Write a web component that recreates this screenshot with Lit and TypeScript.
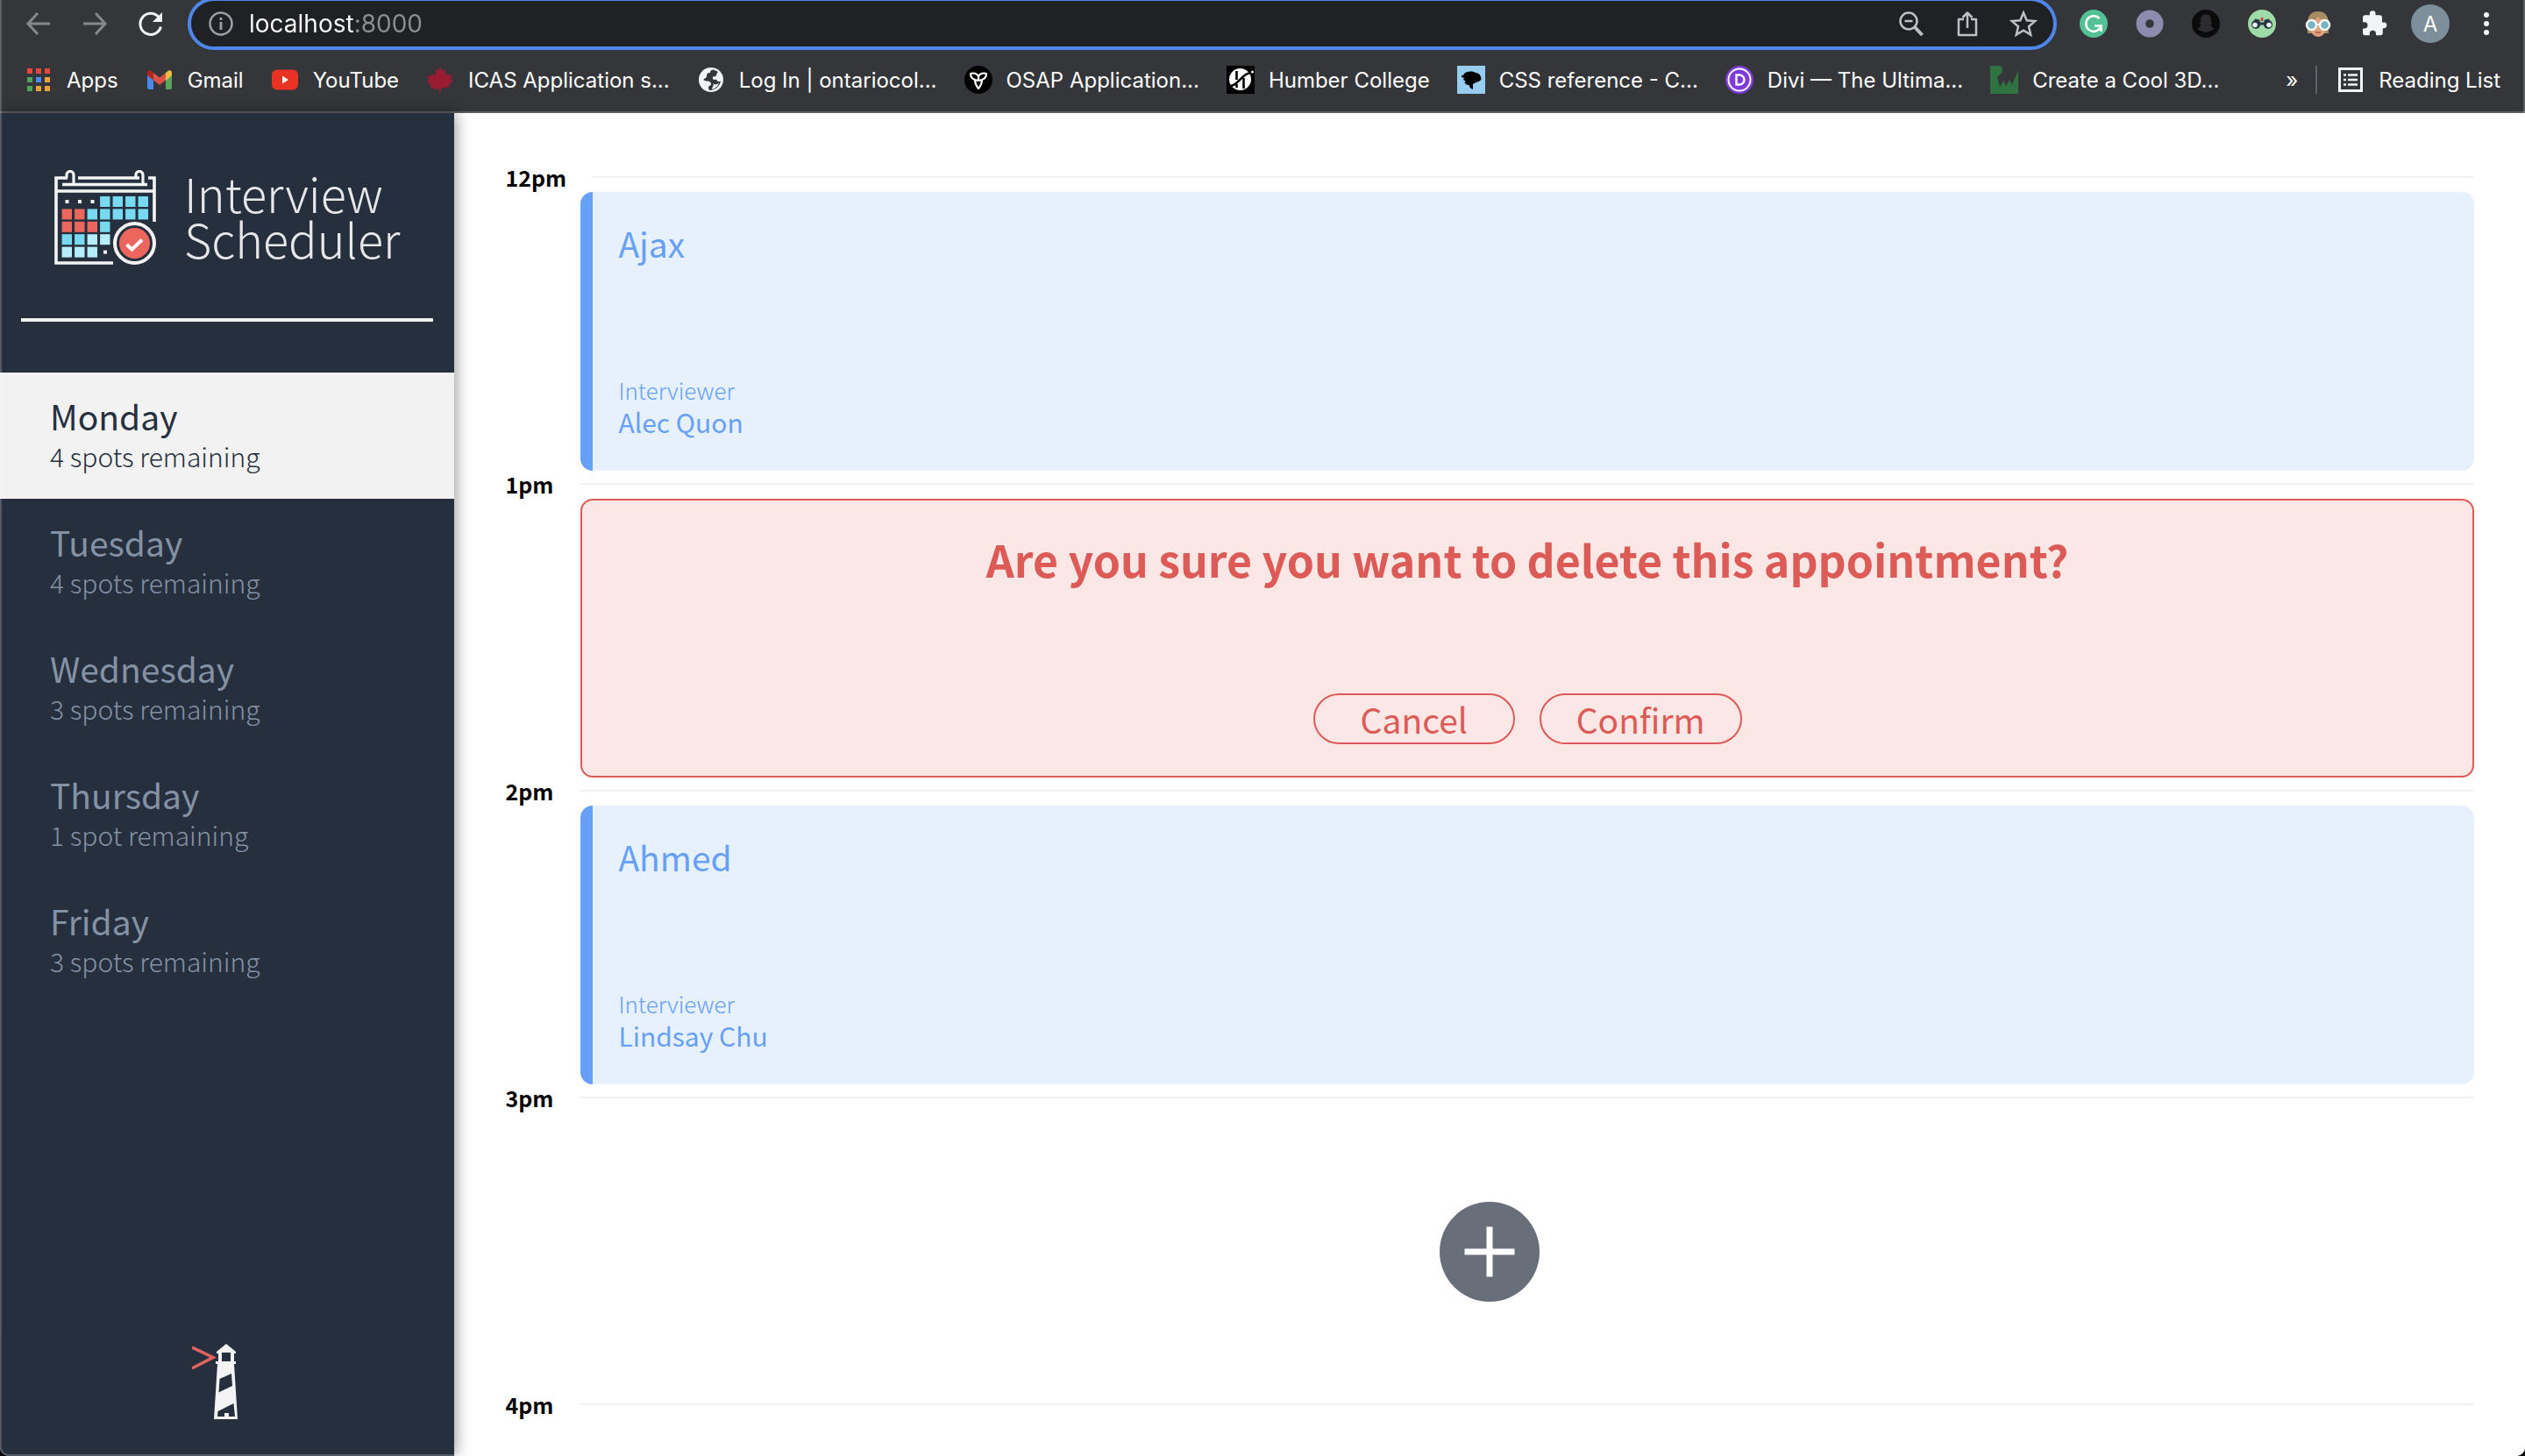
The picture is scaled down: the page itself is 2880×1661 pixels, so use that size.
import { LitElement, html, svg, css, nothing } from "lit";
import { customElement, property, state } from "lit/decorators.js";
import { classMap } from "lit/directives/class-map.js";

/* ---------- icons ---------- */

const icon = (body: unknown, box = "0 0 32 32") =>
  html`<svg class="icon" viewBox=${box} aria-hidden="true">${body}</svg>`;

const line = (d: string, color: string, width = 3) =>
  svg`<path d=${d} fill="none" stroke=${color} stroke-width=${width} />`;

const backIcon = icon(line("M29 16H4M15 4L4 16l11 12", "#87888b"));
const forwardIcon = icon(line("M3 16h25M17 4l11 12-11 12", "#87888b"));
const reloadIcon = icon(svg`
  <path d="M27.500 19.500A12 12 0 1 1 25 8.500" fill="none" stroke="#f1f3f4" stroke-width="3" />
  <path d="M29 3v11H18z" fill="#f1f3f4" />`);
const infoIcon = icon(svg`
  <circle cx="16" cy="16" r="12.500" fill="none" stroke="#9aa0a6" stroke-width="2.500" />
  <path d="M14.600 14h2.800v9h-2.800zM14.600 9h2.800v3h-2.800z" fill="#9aa0a6" />`);
const zoomIcon = icon(svg`
  <circle cx="13" cy="13" r="9.500" fill="none" stroke="#bdc1c6" stroke-width="2.500" />
  <path d="M8.500 13h9" fill="none" stroke="#bdc1c6" stroke-width="2.500" />
  <path d="M20 20l8.500 9" stroke="#bdc1c6" stroke-width="4" />`);
const shareIcon = icon(svg`
  <path d="M12 11H6v18h20V11h-6M16 21V4M10.500 9L16 3.500 21.500 9" fill="none" stroke="#bdc1c6"
    stroke-width="2.500" stroke-linejoin="round" />`);
const starIcon = icon(svg`
  <path d="M16 3.500l3.700 8.800 9.500.8-7.200 6.200 2.200 9.300-8.200-4.900-8.200 4.900L10 19.300l-7.200-6.200 9.500-.8z"
    fill="none" stroke="#bdc1c6" stroke-width="2.500" />`);

const grammarIcon = icon(svg`
  <circle cx="16" cy="16" r="16" fill="#54c096" />
  <path d="M22.500 10A8.800 8.800 0 1 0 24.500 18.500H17M24.500 18.500v6.500" fill="none" stroke="#fff" stroke-width="2.600" />`);
const ringIcon = icon(svg`
  <circle cx="16" cy="16" r="15.500" fill="#8d8bae" /><circle cx="16" cy="16" r="4.800" fill="#35363a" />`);
const ghostIcon = icon(svg`
  <circle cx="16" cy="16" r="16" fill="#0b0b0c" />
  <path d="M16 5c-4 0-6 3-5.700 6.500v2.500l-2.300.8 2.500 2.200c-.8 2.500-2.500 4-4.500 4.800 1 1.400 3 1 3.700 2.400
    2.300-.3 3.800 1.800 6.300 1.800s4-2.100 6.300-1.800c.7-1.400 2.700-1 3.700-2.400-2-.8-3.700-2.300-4.500-4.800l2.500-2.200-2.300-.8
    v-2.500C22 8 20 5 16 5z" fill="#2b2c2f" />`);
const binocularsIcon = icon(svg`
  <circle cx="16" cy="16" r="16" fill="#9fdba9" />
  <path d="M8 10.500l5 1 1 3h4l1-3 5-1 3 7H5z" fill="#2b3646" />
  <circle cx="9" cy="17" r="5" fill="#2b3646" /><circle cx="23" cy="17" r="5" fill="#2b3646" />
  <circle cx="8" cy="17.500" r="2.800" fill="#e7f0f2" /><circle cx="24" cy="17.500" r="2.800" fill="#e7f0f2" />
  <path d="M14.600 9h2.800v4h-2.800z" fill="#c94440" />`);
const faceIcon = icon(svg`
  <path d="M4 16C4 6 9 2 16 2s12 4 12 14v11h-5V14H9v13H4z" fill="#a98d62" />
  <path d="M7 13l9-5 9 5v8c0 6-5 10-9 10s-9-4-9-10z" fill="#dfa27c" />
  <path d="M6 13c6 0 9-3 10-6 2 3 5 6 10 6V8L16 3 6 8z" fill="#a98d62" />
  <path d="M13 26h6" stroke="#b9573f" stroke-width="1.500" />
  <circle cx="8.500" cy="17.500" r="5.500" fill="#78b2c5" stroke="#f4f6f6" stroke-width="2.500" />
  <circle cx="23.500" cy="17.500" r="5.500" fill="#78b2c5" stroke="#f4f6f6" stroke-width="2.500" />
  <path d="M14 17h4" stroke="#f4f6f6" stroke-width="2" />`);
const puzzleIcon = icon(svg`
  <path d="M27 14.500h-2V9a2.700 2.700 0 0 0-2.700-2.700H17.500V4.500a3.300 3.300 0 0 0-6.600 0v1.800H5.700A2.700 2.700 0 0 0 3 9v5.200
    h1.900a3.600 3.600 0 0 1 0 7.200H3v5.200a2.700 2.700 0 0 0 2.700 2.700h5.100v-2a3.600 3.600 0 0 1 7.200 0v2h5.100
    a2.700 2.700 0 0 0 2.700-2.700v-5.400h1.200a3.300 3.300 0 0 0 0-6.700z" fill="#f1f3f4" />`);
const dotsIcon = icon(svg`
  <circle cx="16" cy="6" r="3" fill="#f1f3f4" /><circle cx="16" cy="16" r="3" fill="#f1f3f4" />
  <circle cx="16" cy="26" r="3" fill="#f1f3f4" />`);

const appColors = ["#e8453c", "#e8453c", "#e8453c", "#53a35b", "#4a8af4", "#eaa43a", "#53a35b", "#eaa43a", "#eaa43a"];
const appsIcon = icon(appColors.map((fill, i) =>
  svg`<rect x=${3 + (i % 3) * 10} y=${3 + Math.floor(i / 3) * 10} width="6" height="6" fill=${fill} />`));
const gmailIcon = icon(svg`
  <path d="M2 9l7 5v13H4a2 2 0 0 1-2-2z" fill="#4b87ee" />
  <path d="M23 14l7-5v16a2 2 0 0 1-2 2h-5z" fill="#58a65c" />
  <path d="M23 8l3-2.300C28 4.500 30 6 30 8v3l-7 6z" fill="#f3bd42" />
  <path d="M9 8l7 5.500L23 8v8.500L16 22l-7-5.500z" fill="#dd5144" />
  <path d="M2 11V8c0-2 2-3.500 4-2.300L9 8v8.500z" fill="#b3261e" />`);
const youtubeIcon = icon(svg`
  <rect x="1" y="4.500" width="30" height="23" rx="6" fill="#e93223" />
  <path d="M13 11.500v9l7-4.500z" fill="#fff" />`);
const mapleIcon = icon(svg`
  <path d="M16 1l3 5 3-2v7l3-3 1 3h4l-2 4 3 2-5 4 1 3-6 1-4 1v4h-2v-4l-5 1-5-3v-3l-4-2 2-3-2-4h4l1-3 4 3 1-8 3 2z"
    fill="#9a1c33" />`);
const globeIcon = icon(svg`
  <circle cx="16" cy="16" r="14" fill="#f1f3f4" />
  <path d="M19 4.500c-3 0-4 1.500-4 3.500-3 0-4 1.500-4 3.500s-1 3-3.500 3.500c0 2 2 2.500 4.500 2.500s4 1.500 4 3.500-3 1.500-3 4 1 2.500 2 3
    c6-.5 11-5 12-10.500-1.500 1-4 .5-4.500-1s-4 .5-4.500-2 1-2 3-2.500.500-3 2-3.500.500-2.500-1-2.500z" fill="#35363a" />
  <path d="M18 20c2 2 5 1.500 7-.5-1 3.500-4 6.500-8 7.500 0-3 3-4 1-7z" fill="#f1f3f4" />`);
const trilliumIcon = icon(svg`
  <circle cx="16" cy="16" r="16" fill="#000" />
  <path d="M16 12c-2-3.500-6-4-9-3 0 4 2 6 5 7 0 4 1.500 7 4 10 2.500-3 4-6 4-10 3-1 5-3 5-7-3-1-7-.5-9 3zm0 0v5l-4-1m4 1l4-1"
    fill="none" stroke="#fff" stroke-width="2.200" stroke-linejoin="round" />`);
const humberIcon = icon(svg`
  <path d="M0 0h32v32H0z" fill="#000" /><circle cx="15.500" cy="15.500" r="12.500" fill="#fff" />
  <path d="M11.500 6v10M5 23C14 21 17 10 27 8M19.500 14v12M11.500 21v4" fill="none" stroke="#000" stroke-width="2.600" />
  <circle cx="29.500" cy="7" r="1.500" fill="#fff" />`);
const cssIcon = icon(svg`
  <path d="M0 0h32v32H0z" fill="#97cef0" />
  <path d="M8 9c4-3 9-3 13-1 4 0 6 3 6.500 7-1 3-4 3-6 4l-3.500 2v6c-3-1-4-3-4.500-5-3 0-4-1-5-3l1-2-3-1 2-1.500
    c-1.500-1-3-1-4-3 2 0 3-1 3.500-2.500z" fill="#000" />`);
const diviIcon = icon(svg`
  <circle cx="16" cy="16" r="16" fill="#7e3bdc" />
  <circle cx="16" cy="16" r="12.500" fill="none" stroke="#fff" stroke-width="2" />
  <path d="M12.500 10.500v11h3.500a5.500 5.500 0 0 0 0-11z" fill="none" stroke="#fff" stroke-width="2.400" />`);
const createIcon = icon(svg`
  <path d="M0 0h8c6 0 7 4 5 8l-5 5 3 11 4-7 3 6 4-7 3 6 7-17v27H0z" fill="#2f7340" />`);
const readingIcon = icon(svg`
  <rect x="3.500" y="3.500" width="25" height="25" fill="none" stroke="#f1f3f4" stroke-width="3" />
  <path d="M8 10.500h3M8 16h3M8 21.500h3M13 10.500h11M13 16h11M13 21.500h11" stroke="#f1f3f4" stroke-width="2.400" />`);

/* ---------- data ---------- */

const bookmarks = [
  { label: "Apps", icon: appsIcon },
  { label: "Gmail", icon: gmailIcon },
  { label: "YouTube", icon: youtubeIcon },
  { label: "ICAS Application s...", icon: mapleIcon },
  { label: "Log In | ontariocol...", icon: globeIcon },
  { label: "OSAP Application...", icon: trilliumIcon },
  { label: "Humber College", icon: humberIcon },
  { label: "CSS reference - C...", icon: cssIcon },
  { label: "Divi — The Ultima...", icon: diviIcon },
  { label: "Create a Cool 3D...", icon: createIcon },
];

const extensions = [
  { name: "Grammar", icon: grammarIcon },
  { name: "Ring", icon: ringIcon },
  { name: "Ghost", icon: ghostIcon },
  { name: "Binoculars", icon: binocularsIcon },
  { name: "Face", icon: faceIcon },
  { name: "Extensions", icon: puzzleIcon },
];

const days = [
  { name: "Monday", spots: 4 },
  { name: "Tuesday", spots: 4 },
  { name: "Wednesday", spots: 3 },
  { name: "Thursday", spots: 1 },
  { name: "Friday", spots: 3 },
];

type Slot = { time: string; kind: "show" | "confirm" | "empty" | "last"; student?: string; interviewer?: string };

const slots: Slot[] = [
  { time: "12pm", kind: "show", student: "Ajax", interviewer: "Alec Quon" },
  { time: "1pm", kind: "confirm" },
  { time: "2pm", kind: "show", student: "Ahmed", interviewer: "Lindsay Chu" },
  { time: "3pm", kind: "empty" },
  { time: "4pm", kind: "last" },
];

/* ---------- shared styles ---------- */

const base = css`
  * { box-sizing: border-box; }
  button { margin: 0; padding: 0; border: 0; background: none; font: inherit; color: inherit; cursor: pointer; }
  ul { margin: 0; padding: 0; list-style: none; }
  a { color: inherit; text-decoration: none; }
  svg { display: block; }
`;

/* ---------- browser bars ---------- */

@customElement("browser-bars")
export class BrowserBars extends LitElement {
  static styles = [base, css`
    :host {
      display: block;
      background: #35363a;
      border-bottom: 2px solid #5f6064;
      color: #fff;
      font-family: Inter, "Liberation Sans", sans-serif;
      overflow: hidden;
    }
    .icon { width: 32px; height: 32px; flex: none; }
    .toolbar { display: flex; align-items: center; gap: 26px; margin-top: -3px; padding: 0 28px; }
    .group { display: flex; align-items: center; gap: 32px; }
    .omnibox {
      flex: 1;
      display: flex;
      align-items: center;
      gap: 16px;
      height: 60px;
      padding: 0 18px;
      border: 4px solid #4e86ec;
      border-radius: 30px;
      background: #202124;
    }
    .address {
      flex: 1;
      min-width: 0;
      padding: 0;
      border: 0;
      outline: 0;
      font: 28px Inter, "Liberation Sans", sans-serif;
      color: transparent;
      background: linear-gradient(90deg, #fff 122px, #8c8e91 122px) text;
    }
    .avatar {
      width: 44px;
      height: 44px;
      margin: 0 -6px;
      border-radius: 50%;
      background: #7c8f9b;
      font-size: 24px;
      text-align: center;
    }
    .bookmarks { display: flex; align-items: center; height: 70px; padding: 0 28px 2px; font-size: 24px; }
    .list { display: flex; gap: 31px; flex: 1; }
    .bookmark { display: flex; align-items: center; gap: 16px; white-space: nowrap; }
    .reading { margin-left: 20px; padding-left: 22px; border-left: 2px solid #5f6368; height: 32px; }
  `];

  render() {
    return html`
      <div class="toolbar">
        <div class="group">
          <button aria-label="Back">${backIcon}</button>
          <button aria-label="Forward">${forwardIcon}</button>
          <button aria-label="Reload">${reloadIcon}</button>
        </div>
        <div class="omnibox">
          ${infoIcon}
          <input class="address" aria-label="Address" value="localhost:8000" />
          <div class="group">
            <button aria-label="Zoom">${zoomIcon}</button>
            <button aria-label="Share">${shareIcon}</button>
            <button aria-label="Bookmark">${starIcon}</button>
          </div>
        </div>
        <div class="group">
          ${extensions.map((e) => html`<button aria-label=${e.name}>${e.icon}</button>`)}
          <button class="avatar" aria-label="Profile">A</button>
          <button aria-label="Menu">${dotsIcon}</button>
        </div>
      </div>
      <nav class="bookmarks">
        <div class="list">
          ${bookmarks.map((b) => html`<a class="bookmark" href="#">${b.icon}<span>${b.label}</span></a>`)}
        </div>
        <button aria-label="More bookmarks">»</button>
        <a class="bookmark reading" href="#">${readingIcon}<span>Reading List</span></a>
      </nav>`;
  }
}

/* ---------- sidebar ---------- */

const B = "#78daf1";
const R = "#ed665e";
const L = "#b5eefa";
const calendar: (string | null)[][] = [
  ["dot", "dot", "dot", B, B, B, B],
  [R, R, B, B, B, B, B],
  [R, R, R, B, null, null, null],
  [B, B, L, L, null, null, null],
  [L, L, L, "dot", null, null, null],
];

@customElement("day-sidebar")
export class DaySidebar extends LitElement {
  @state() private day = "Monday";

  static styles = [base, css`
    :host {
      display: flex;
      flex-direction: column;
      background: #262f3e;
      box-shadow: 2px 0 16px rgba(0, 0, 0, 0.4);
      font-family: "Source Sans Pro", "Noto Sans CJK SC", sans-serif;
      z-index: 1;
    }
    .brand { display: flex; justify-content: center; gap: 32px; padding-top: 65px; }
    .mark { width: 116px; height: 108px; flex: none; }
    .name { margin: 0; font-size: 54px; line-height: 52px; font-weight: 200; color: #e8e8ea; }
    .word { display: block; }
    .rule { width: calc(100% - 48px); height: 4px; margin: 61px 24px 58px; border: 0; background: #f0f0ee; }
    .day {
      display: flex;
      flex-direction: column;
      justify-content: center;
      width: 100%;
      height: 144px;
      padding: 0 57px 6px;
      text-align: left;
      color: #8492a6;
    }
    .selected { background: #f2f2f2; color: #262f3e; }
    .title { font-size: 39px; line-height: 52px; }
    .spots { font-size: 30px; line-height: 40px; font-weight: 300; }
    .lighthouse { width: 80px; height: 86px; margin: auto auto 42px; }
  `];

  render() {
    return html`
      <div class="brand">
        <svg class="mark" viewBox="0 0 116 108" aria-hidden="true">
          <path d="M15 9H2v97h65M27 9h70M107 9h7v50M9 16.500h97M2 24h112" fill="none" stroke="#f3f3f3" stroke-width="3.600" />
          <path d="M14 9V5.500a4 4 0 0 1 8 0V16M93 9V5.500a4 4 0 0 1 8 0V16" fill="none" stroke="#f3f3f3" stroke-width="3.200" />
          ${calendar.map((row, y) => row.map((cell, x) =>
            cell === null ? nothing
              : cell === "dot"
                ? svg`<rect x=${12.5 + x * 14.5} y=${34 + y * 14.4} width="4" height="4" fill="#f3f3f3" />`
                : svg`<rect x=${8.6 + x * 14.5} y=${30 + y * 14.4} width="11.400" height="12" fill=${cell} />`))}
          <circle cx="91.500" cy="83.500" r="22.500" fill="#262f3e" stroke="#f3f3f3" stroke-width="4" />
          <circle cx="91.500" cy="83.500" r="17.500" fill=${R} />
          <path d="M82.500 85l6 5.500L100 79.500" fill="none" stroke="#fff" stroke-width="4" />
        </svg>
        <h1 class="name"><span class="word">Interview</span><span class="word">Scheduler</span></h1>
      </div>
      <hr class="rule" />
      <nav>
        <ul>
          ${days.map((d) => html`<li>
            <button class=${classMap({ day: true, selected: d.name === this.day })} @click=${() => (this.day = d.name)}>
              <span class="title">${d.name}</span>
              <span class="spots">${d.spots} ${d.spots === 1 ? "spot" : "spots"} remaining</span>
            </button>
          </li>`)}
        </ul>
      </nav>
      <svg class="lighthouse" viewBox="0 0 80 86" aria-hidden="true">
        <path d="M0 4l24 11.500L0 28" fill="none" stroke="#e2635f" stroke-width="3.600" />
        <path d="M39 0l11 9v2h-2v9h2v3h-2l4 63H25l4-63h-2v-3h3v-9h-2V9z" fill="#f3f3f3" />
        <path d="M34 10h10v10H34zM31.500 40L45 34l1 14-15.500 7.500zM29.500 77l18-9 1.500 15h-7v-4h-5v4h-8z" fill="#262f3e" />
      </svg>`;
  }
}

/* ---------- appointment ---------- */

@customElement("appointment-slot")
export class AppointmentSlot extends LitElement {
  @property({ attribute: false }) slotData!: Slot;

  static styles = [base, css`
    :host { display: block; }
    .time { display: flex; align-items: center; gap: 30px; height: 30px; margin-bottom: 2px; }
    .hour { min-width: 54px; margin: 0; font-size: 25px; line-height: 30px; font-weight: 600; color: #000; }
    .divider { flex: 1; height: 2px; margin: 0; border: 0; background: #f2f2f2; }
    .card {
      display: flex;
      flex-direction: column;
      justify-content: space-between;
      height: 318px;
      margin-left: 86px;
      border-radius: 14px;
    }
    .show { padding: 28px 28px 37px 29px; border-left: 14px solid #66a0f8; background: #e7f1fe; color: #66a0f8; }
    .student { margin: 0; font-size: 39px; line-height: 60px; font-weight: 400; }
    .role { margin: 0; font-size: 26px; line-height: 34px; font-weight: 300; }
    .person { margin: 0; font-size: 30px; line-height: 38px; font-weight: 400; }
    .confirm { align-items: center; padding: 28px 36px 36px; border: 2px solid #dd5b57; background: #fbe7e6; color: #dd5b57; }
    .question { margin: 0; font-size: 50px; line-height: 76px; font-weight: 600; }
    .actions { display: flex; gap: 28px; }
    .action {
      min-width: 230px;
      height: 58px;
      padding: 0 40px;
      border: 2px solid #dd5b57;
      border-radius: 29px;
      font-size: 39px;
      line-height: 52px;
    }
    .empty { display: grid; place-items: center; height: 318px; }
    .add { width: 114px; height: 114px; }
  `];

  private body(s: Slot) {
    switch (s.kind) {
      case "show":
        return html`<article class="card show">
          <h2 class="student">${s.student}</h2>
          <div>
            <h4 class="role">Interviewer</h4>
            <h3 class="person">${s.interviewer}</h3>
          </div>
        </article>`;
      case "confirm":
        return html`<article class="card confirm">
          <h2 class="question">Are you sure you want to delete this appointment?</h2>
          <div class="actions">
            <button class="action">Cancel</button>
            <button class="action">Confirm</button>
          </div>
        </article>`;
      case "empty":
        return html`<div class="empty">
          <button aria-label="Add appointment">
            <svg class="add" viewBox="0 0 114 114" aria-hidden="true">
              <circle cx="57" cy="57" r="57" fill="#686f79" />
              <path d="M57 28.500v57M28.500 57h57" stroke="#fff" stroke-width="7" />
            </svg>
          </button>
        </div>`;
      default:
        return nothing;
    }
  }

  render() {
    return html`
      <header class="time">
        <h4 class="hour">${this.slotData.time}</h4>
        <hr class="divider" />
      </header>
      ${this.body(this.slotData)}`;
  }
}

/* ---------- page ---------- */

@customElement("app-root")
export class AppRoot extends LitElement {
  static styles = [base, css`
    :host { display: block; background: #000; }
    .window {
      position: relative;
      display: flex;
      flex-direction: column;
      min-height: 100vh;
      overflow: hidden;
      border-radius: 0 0 10px 10px;
      background: #fff;
    }
    .window::after {
      content: "";
      position: absolute;
      inset: 0;
      z-index: 2;
      border: 2px solid rgba(255, 255, 255, 0.2);
      border-top: 0;
      border-radius: 0 0 10px 10px;
      pointer-events: none;
    }
    .page { flex: 1; display: flex; }
    .sidebar { width: 18%; flex: none; }
    .schedule {
      flex: 1;
      padding: 58px 58px 0;
      background: #fff;
      font-family: "Source Sans Pro", "Noto Sans CJK SC", sans-serif;
    }
  `];

  render() {
    return html`
      <div class="window">
        <browser-bars></browser-bars>
        <div class="page">
          <day-sidebar class="sidebar"></day-sidebar>
          <main class="schedule">
            ${slots.map((s) => html`<appointment-slot .slotData=${s}></appointment-slot>`)}
          </main>
        </div>
      </div>`;
  }
}
